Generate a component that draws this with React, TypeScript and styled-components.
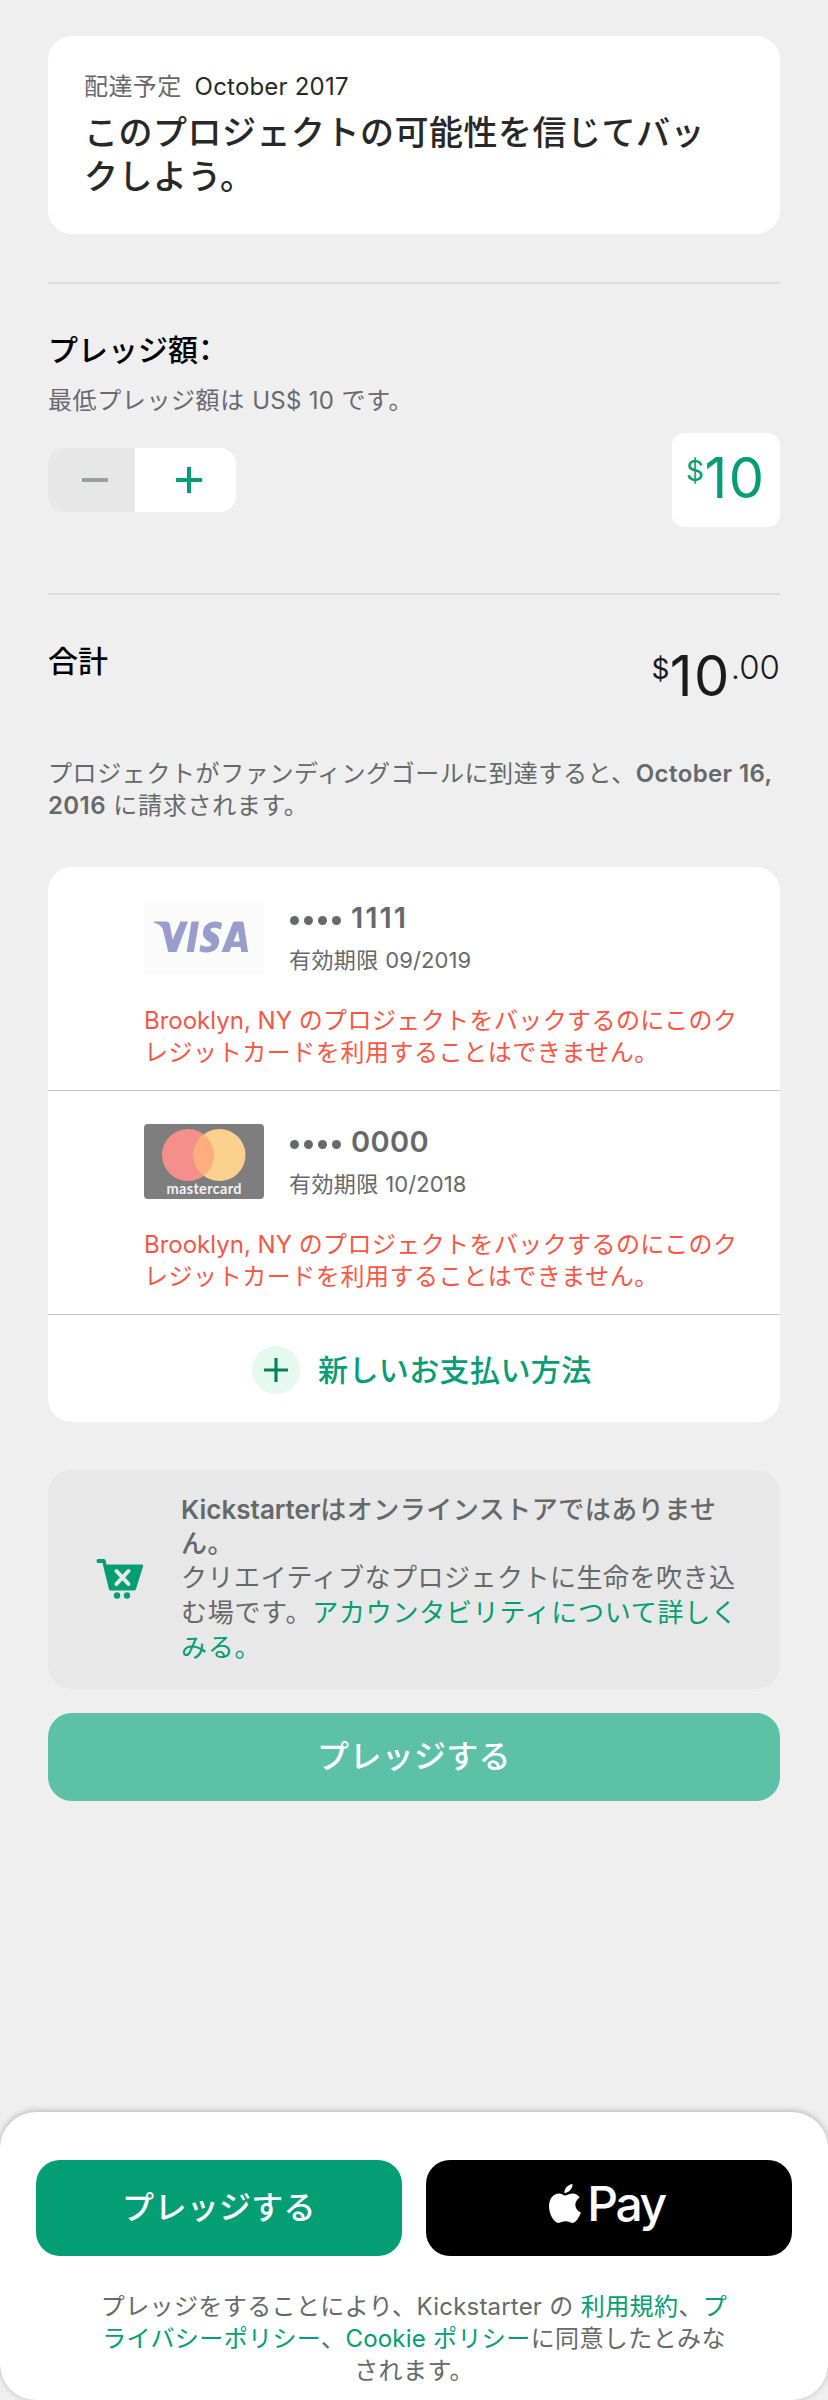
import React from "react";
import styled, { createGlobalStyle } from "styled-components";

const GREEN = "#039e74";
const GREY = "#656969";

const GlobalStyle = createGlobalStyle`
  body { margin: 0; background: #efefef; }
  * { box-sizing: border-box; }
`;

const Page = styled.main`
  width: 828px;
  height: 2400px;
  display: flex;
  flex-direction: column;
  background: #efefef;
  color: #000;
  font-family: Inter, "Noto Sans CJK JP", sans-serif;
  font-size: 24px;
  line-height: 32px;
  overflow: hidden;
`;

const Content = styled.div`
  flex: 1;
  padding: 36px 48px 0;
`;

const Line = styled.div<{ $track?: number }>`
  white-space: nowrap;
  letter-spacing: ${(p) => p.$track ?? 0.4}px;
`;

const Latin = styled.span<{ $track?: number }>`
  letter-spacing: ${(p) => p.$track ?? 0}px;
`;

const RewardCard = styled.section`
  height: 198px;
  margin-bottom: 48px;
  padding: 35px 36px 0;
  background: #fff;
  border-radius: 24px;
`;

const Delivery = styled.div`
  display: flex;
  gap: 13px;
  color: #282828;
`;

const Muted = styled.span`
  color: ${GREY};
  letter-spacing: 0.4px;
`;

const RewardTitle = styled.h1`
  margin: 8px 0 0;
  color: #282828;
  font-size: 34px;
  font-weight: 500;
  line-height: 44px;
`;

const Divider = styled.hr`
  height: 2px;
  margin: 0;
  border: 0;
  background: #dcdcdc;
`;

const SectionTitle = styled.h2`
  margin: 0;
  font-size: 30px;
  font-weight: 500;
  line-height: 40px;
`;

const Colon = styled.span`
  font-feature-settings: "halt" 1;
`;

const PledgeSection = styled.section`
  height: 309px;
  padding-top: 46px;
`;

const Hint = styled.div`
  margin-top: 15px;
  color: #696970;
`;

const AmountRow = styled.div`
  display: flex;
  align-items: center;
  justify-content: space-between;
  margin-top: 16px;
`;

const Stepper = styled.div`
  display: flex;
  width: 188px;
  height: 64px;
  border-radius: 16px;
  overflow: hidden;
`;

const StepButton = styled.button<{ $off?: boolean }>`
  flex: ${(p) => (p.$off ? "0 0 87px" : "1")};
  padding: 0 0 0 7px;
  border: 0;
  display: flex;
  align-items: center;
  justify-content: center;
  background: ${(p) => (p.$off ? "#e7e7e7" : "#fff")};
  color: ${(p) => (p.$off ? "#9b9e9e" : GREEN)};
`;

const AmountBox = styled.div`
  display: flex;
  align-items: flex-start;
  width: 108px;
  height: 94px;
  padding: 11px 0 0 14px;
  border-radius: 12px;
  background: #fff;
  color: ${GREEN};
`;

const Symbol = styled.span`
  padding-top: 7px;
  font-size: 28px;
  line-height: 40px;
  letter-spacing: 0.5px;
`;

const Whole = styled.span`
  font-size: 56px;
  line-height: 68px;
  letter-spacing: 1.4px;
`;

const Cents = styled.span`
  padding-top: 5px;
  font-size: 33px;
  font-weight: 300;
  line-height: 40px;
`;

const TotalSection = styled.section`
  display: flex;
  justify-content: space-between;
  height: 163px;
  padding-top: 46px;
`;

const TotalAmount = styled.div`
  display: flex;
  align-items: flex-start;
  padding-top: 1px;
  color: #1b1b1b;
`;

const ChargeNote = styled.div`
  color: ${GREY};

  b {
    font-weight: 600;
  }
`;

const Methods = styled.section`
  height: 555px;
  margin-top: 45px;
  border-radius: 24px;
  background: #fff;
`;

const Method = styled.article`
  height: 224px;
  padding: 33px 0 0 96px;
  border-bottom: 1px solid #c4c4c4;
`;

const MethodTop = styled.div`
  display: flex;
  gap: 25px;
`;

const Logo = styled.svg`
  display: block;
  width: 120px;
  height: 75px;
`;

const MethodInfo = styled.div`
  color: ${GREY};
`;

const CardNumber = styled.div`
  display: flex;
  align-items: center;
  gap: 10px;
  height: 36px;
  font-size: 29px;
  font-weight: 600;
  line-height: 36px;
`;

const Dots = styled.span`
  display: flex;
  gap: 5px;
  padding: 4px 0 0 1px;

  i {
    width: 9px;
    height: 9px;
    border-radius: 50%;
    background: ${GREY};
  }
`;

const Expiry = styled(Line)`
  margin-top: 8px;
  font-size: 22px;
`;

const Warning = styled.div`
  margin-top: 29px;
  color: #fb5544;
`;

const AddMethod = styled.button`
  display: flex;
  align-items: center;
  gap: 18px;
  width: 100%;
  height: 107px;
  padding: 2px 0 0 204px;
  border: 0;
  background: none;
  color: ${GREEN};
  font: 500 30px/40px Inter, "Noto Sans CJK JP", sans-serif;
`;

const PlusDisc = styled.span`
  display: flex;
  align-items: center;
  justify-content: center;
  width: 48px;
  height: 48px;
  border-radius: 50%;
  background: #e5f9f0;
  color: #04835a;
`;

const Notice = styled.section`
  display: flex;
  gap: 36px;
  height: 219px;
  margin-top: 48px;
  padding: 22px 0 0 48px;
  border-radius: 24px;
  background: #e8e8e8;
  color: ${GREY};
  font-size: 26px;
  line-height: 35px;

  svg {
    margin-top: 66px;
  }
`;

const NoticeHead = styled.div`
  height: 68px;
  padding-top: 1px;
  font-weight: 500;
  line-height: 34px;

  b {
    font-weight: 600;
  }
`;

const Link = styled.a`
  color: ${GREEN};
`;

const Button = styled.button<{ $bg: string; $tall?: boolean }>`
  display: flex;
  align-items: center;
  justify-content: center;
  width: 100%;
  height: ${(p) => (p.$tall ? 96 : 88)}px;
  padding: 0;
  border: 0;
  border-radius: 24px;
  background: ${(p) => p.$bg};
  color: #fff;
  font: 500 32px/44px Inter, "Noto Sans CJK JP", sans-serif;
  letter-spacing: 0.3px;
`;

const SubmitArea = styled.div`
  margin-top: 24px;
`;

const Sheet = styled.footer`
  height: 288px;
  padding: 48px 36px 0;
  border-radius: 36px;
  background: #fff;
  box-shadow: 0 -1px 6px rgba(0, 0, 0, 0.26);
`;

const ButtonRow = styled.div`
  display: grid;
  grid-template-columns: 1fr 1fr;
  gap: 24px;
`;

const PayMark = styled.span`
  display: flex;
  gap: 6px;
  align-items: center;
  padding: 0 4px 8px 0;
  font: 500 48px/60px Inter, sans-serif;
  letter-spacing: -2.4px;

  svg {
    margin-bottom: 1px;
  }
`;

const Legal = styled.div`
  margin-top: 35px;
  color: ${GREY};
  text-align: center;
`;

const VisaLogo = () => (
  <Logo viewBox="0 0 120 75" role="img" aria-label="Visa">
    <rect width="120" height="75" rx="4" fill="#fbfbfb" />
    <g fill="#989dcb">
      <path d="M10 21.500h12c2.200 0 3.500 1 3.900 3.200l2.700 15L36.500 21.500H44L32.500 52h-8.200L18.600 28.500C16.500 25.500 13.500 23.500 10 22.600Z" />
      <path d="M47.500 21.500H55L49.800 52H42.600Z" />
      <path d="M78 23.100l-1.100 6.300c-4.600-2.100-10.200-2.200-10.400.4-.2 2.900 9.200 3.500 8.700 11.400C74.700 51.500 64.500 54.500 55.500 51.200l1.100-6.500c4.600 2.500 10.600 2.600 10.800-.4.200-3-8.800-3.900-8.500-11.400C59.300 22.500 70 19 78 23.100Z" />
      <path fillRule="evenodd" d="M91 21.500h6.200c1.400 0 2.300.6 2.600 2L104 52h-6.700l-.8-5h-9.300l-1.900 5h-7.800l11-28.200c.5-1.500 1.300-2.300 2.500-2.300ZM93.900 30.500l-4.400 11.100h6.200Z" />
    </g>
  </Logo>
);

const MastercardLogo = () => (
  <Logo viewBox="0 0 120 75" role="img" aria-label="mastercard">
    <rect width="120" height="75" rx="4" fill="#7e7e7e" />
    <circle cx="44" cy="31" r="26" fill="#f58f8b" />
    <circle cx="75.500" cy="31" r="26" fill="#fcd08d" />
    <path d="M59.750 10.300a26 26 0 0 1 0 41.400a26 26 0 0 1 0-41.400Z" fill="#ffad7c" />
    <text x="60" y="69.500" textAnchor="middle" textLength="75" fill="#f2f2f2" fontFamily="Lato, sans-serif" fontSize="14.500" fontWeight="700">
      mastercard
    </text>
  </Logo>
);

const PlusIcon = ({ size, stroke }: { size: number; stroke: number }) => (
  <svg width={size} height={size} viewBox="0 0 28 28" fill="none" stroke="currentColor" strokeWidth={stroke}>
    <path d="M14 1v26M1 14h26" />
  </svg>
);

const CartIcon = () => (
  <svg width="49" height="42" viewBox="0 0 49 42">
    <path d="M2 1h5.500c1.200 0 1.900.6 2.200 1.700L10.500 6.500h35c1.300 0 1.800.8 1.500 2l-7 22.600c-.3 1-.9 1.400-1.900 1.400H15c-1.200 0-1.800-.5-2.100-1.600L6.500 5H2C.200 5 .200 1 2 1Z" fill={GREEN} />
    <path d="m20.500 13 12 13m0-13-12 13" stroke="#e8e8e8" strokeWidth="4" strokeLinecap="round" />
    <circle cx="21" cy="37.500" r="3.200" fill={GREEN} />
    <circle cx="31" cy="37.500" r="3.200" fill={GREEN} />
  </svg>
);

const AppleIcon = () => (
  <svg width="32" height="39" viewBox="0 0 32 39" fill="#fff">
    <path d="M23.500 0c.300 4.200-3.600 9-8 8.900C15 4.700 19 .500 23.500 0Z" />
    <path d="M16 11.500c1.700 0 4.200-2 7.700-2 3.200.1 5.600 1.700 7 3.900-6.400 4-5.500 12.300 1.200 15C30.300 33 27 38.800 23.400 38.900c-2.600 0-3.600-1.600-6.900-1.600s-4.400 1.600-6.900 1.600C4.500 38.900 0 29.800 0 22.300 0 14.500 4.700 9.500 10 9.500c2.700 0 4.700 2 6 2Z" />
  </svg>
);

interface SavedMethodProps {
  logo: React.ReactNode;
  digits: string;
  expiry: string;
  track: number;
}

const SavedMethod = ({ logo, digits, expiry, track }: SavedMethodProps) => (
  <Method>
    <MethodTop>
      {logo}
      <MethodInfo>
        <CardNumber>
          <Dots><i /><i /><i /><i /></Dots>
          <Latin $track={track}>{digits}</Latin>
        </CardNumber>
        <Expiry>有効期限 <Latin $track={0.1}>{expiry}</Latin></Expiry>
      </MethodInfo>
    </MethodTop>
    <Warning>
      <Line><Latin>Brooklyn, NY </Latin>のプロジェクトをバックするのにこのク</Line>
      <Line $track={0.55}>レジットカードを利用することはできません。</Line>
    </Warning>
  </Method>
);

export default function App() {
  return (
    <Page lang="ja">
      <GlobalStyle />
      <Content>
        <RewardCard>
          <Delivery>
            <Muted>配達予定</Muted>
            <Latin $track={0.2}>October 2017</Latin>
          </Delivery>
          <RewardTitle>
            <Line $track={0.5}>このプロジェクトの可能性を信じてバッ</Line>
            <Line $track={0.5}>クしよう。</Line>
          </RewardTitle>
        </RewardCard>
        <Divider />
        <PledgeSection>
          <SectionTitle>プレッジ額<Colon>：</Colon></SectionTitle>
          <Hint>
            <Line $track={0.6}>最低プレッジ額は <Latin $track={0.3}>US$ 10</Latin> です。</Line>
          </Hint>
          <AmountRow>
            <Stepper>
              <StepButton $off aria-label="減らす">
                <svg width="26" height="4"><rect width="26" height="4" fill="currentColor" /></svg>
              </StepButton>
              <StepButton aria-label="増やす"><PlusIcon size={28} stroke={4} /></StepButton>
            </Stepper>
            <AmountBox><Symbol>$</Symbol><Whole>10</Whole></AmountBox>
          </AmountRow>
        </PledgeSection>
        <Divider />
        <TotalSection>
          <SectionTitle>合計</SectionTitle>
          <TotalAmount><Symbol>$</Symbol><Whole>10</Whole><Cents>.00</Cents></TotalAmount>
        </TotalSection>
        <ChargeNote>
          <Line $track={0.6}>プロジェクトがファンディングゴールに到達すると、<Latin as="b" $track={0.4}>October 16,</Latin></Line>
          <Line $track={0.7}><Latin as="b" $track={0.4}>2016</Latin> に請求されます。</Line>
        </ChargeNote>
        <Methods>
          <SavedMethod logo={<VisaLogo />} digits="1111" expiry="09/2019" track={2} />
          <SavedMethod logo={<MastercardLogo />} digits="0000" expiry="10/2018" track={0.4} />
          <AddMethod>
            <PlusDisc><PlusIcon size={26} stroke={3.4} /></PlusDisc>
            <Line>新しいお支払い方法</Line>
          </AddMethod>
        </Methods>
        <Notice>
          <CartIcon />
          <div>
            <NoticeHead>
              <Line $track={0.5}><Latin as="b">Kickstarter</Latin>はオンラインストアではありませ</Line>
              <Line $track={0.5}>ん。</Line>
            </NoticeHead>
            <Line $track={0.5}>クリエイティブなプロジェクトに生命を吹き込</Line>
            <Line $track={0.75}>む場です。<Link>アカウンタビリティについて詳しく</Link></Line>
            <Line $track={0.75}><Link>みる。</Link></Line>
          </div>
        </Notice>
        <SubmitArea>
          <Button $bg="#5dc1a7">プレッジする</Button>
        </SubmitArea>
      </Content>
      <Sheet>
        <ButtonRow>
          <Button $bg={GREEN} $tall>プレッジする</Button>
          <Button $bg="#000" $tall><PayMark><AppleIcon />Pay</PayMark></Button>
        </ButtonRow>
        <Legal>
          <Line>プレッジをすることにより、<Latin $track={0.2}>Kickstarter</Latin> の <Link>利用規約</Link>、<Link>プ</Link></Line>
          <Line><Link>ライバシーポリシー</Link>、<Link><Latin $track={0.2}>Cookie</Latin> ポリシー</Link>に同意したとみな</Line>
          <Line>されます。</Line>
        </Legal>
      </Sheet>
    </Page>
  );
}
